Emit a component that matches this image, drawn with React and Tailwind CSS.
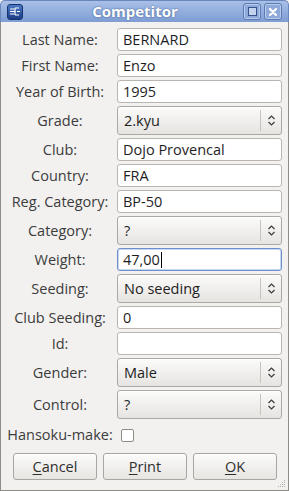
import React from 'react'

const font = { fontFamily: '"Open Sans", "DejaVu Sans", sans-serif' }

const Chevrons = () => (
  <svg width="9" height="13" viewBox="0 0 9 13" fill="none" stroke="#3c3c3c" strokeWidth="1.2">
    <path d="M1.5 5 L4.5 2 L7.5 5" />
    <path d="M1.5 8 L4.5 11 L7.5 8" />
  </svg>
)

const Entry = ({ value, focused }) => (
  <div
    className={`h-[23px] rounded-[3px] border bg-white px-[5px] flex items-center text-[14.5px] text-[#1e1e1e] ${
      focused ? 'border-[#6d8fcb] shadow-[inset_0_0_0_1px_#c9d8f0]' : 'border-[#b9b5b0]'
    }`}
  >
    <span>{value}</span>
    {focused && <span className="w-px h-[16px] bg-black ml-px" />}
  </div>
)

const Combo = ({ value }) => (
  <div className="h-[29px] rounded-[3px] border border-[#aca9a4] bg-gradient-to-b from-[#fbfbfa] to-[#e6e4e1] flex items-center shadow-[inset_0_1px_0_#ffffff]">
    <span className="flex-1 pl-[6px] text-[14.5px] text-[#1e1e1e]">{value}</span>
    <div className="w-px h-[21px] bg-[#c7c4c0]" />
    <div className="w-[20px] flex items-center justify-center">
      <Chevrons />
    </div>
  </div>
)

const Label = ({ children }) => (
  <div className="justify-self-center whitespace-nowrap text-[14.5px] text-[#3c3c3c]">{children}</div>
)

const Button = ({ mnemonic, rest }) => (
  <div className="w-[84px] h-[27px] rounded-[3px] border border-[#a9a6a1] bg-gradient-to-b from-[#fbfbfa] to-[#e7e5e2] shadow-[inset_0_1px_0_#ffffff] flex items-center justify-center text-[14.5px] text-[#2e2e2e]">
    <span>
      <span className="underline underline-offset-2">{mnemonic}</span>
      {rest}
    </span>
  </div>
)

const rows = [
  ['Last Name:', 'entry', 'BERNARD'],
  ['First Name:', 'entry', 'Enzo'],
  ['Year of Birth:', 'entry', '1995'],
  ['Grade:', 'combo', '2.kyu'],
  ['Club:', 'entry', 'Dojo Provencal'],
  ['Country:', 'entry', 'FRA'],
  ['Reg. Category:', 'entry', 'BP-50'],
  ['Category:', 'combo', '?'],
  ['Weight:', 'focus', '47,00'],
  ['Seeding:', 'combo', 'No seeding'],
  ['Club Seeding:', 'entry', '0'],
  ['Id:', 'entry', ''],
  ['Gender:', 'combo', 'Male'],
  ['Control:', 'combo', '?'],
]

export default function App() {
  return (
    <div className="w-[289px] h-[491px] flex flex-col bg-[#f2f1f0]" style={font}>
      {/* title bar */}
      <div className="h-[22px] rounded-t-[5px] border border-b-0 border-[#6a87bd] bg-gradient-to-b from-[#a9c0e8] to-[#7e9dd3] flex items-center px-[6px] relative">
        <div className="w-[16px] h-[16px] rounded-[3px] bg-gradient-to-b from-[#4a78c4] to-[#1d3f86] border border-[#163270] flex items-center justify-center">
          <svg width="10" height="9" viewBox="0 0 10 9" fill="none" stroke="#ffffff" strokeWidth="1.2">
            <path d="M0 2 H4 M0 4.5 H5 M0 7 H4 M5 1 V8 M5 1 H9 M5 8 H9 M7 4.5 H10" />
          </svg>
        </div>
        <div className="flex-1 text-center text-[15px] font-bold text-white [text-shadow:0_0_2px_#3b5588] ml-[4px]">
          Competitor
        </div>
        <div className="flex gap-[3px]">
          <div className="w-[18px] h-[17px] rounded-[3px] border border-[#5c7ab3] bg-[#8faada] shadow-[inset_0_0_0_1px_#b8cbed] flex items-center justify-center">
            <div className="w-[9px] h-[9px] border-[1.5px] border-[#34518a] bg-[#c3d3ef]" />
          </div>
          <div className="w-[18px] h-[17px] rounded-[3px] border border-[#5c7ab3] bg-[#8faada] shadow-[inset_0_0_0_1px_#b8cbed] flex items-center justify-center">
            <svg width="10" height="10" viewBox="0 0 10 10" stroke="#ffffff" strokeWidth="2.2" strokeLinecap="round">
              <path d="M2 2 L8 8 M8 2 L2 8" />
            </svg>
          </div>
        </div>
      </div>

      {/* body */}
      <div className="flex-1 border border-t-0 border-[#8e8c88] px-[6px] pt-[6px] flex flex-col relative">
        <div className="grid grid-cols-[106px_1fr] gap-x-[4px] gap-y-[3px] items-center">
          {rows.map(([label, kind, value]) => (
            <React.Fragment key={label}>
              <Label>{label}</Label>
              {kind === 'combo' ? (
                <Combo value={value} />
              ) : (
                <Entry value={value} focused={kind === 'focus'} />
              )}
            </React.Fragment>
          ))}
          <div className="justify-self-center whitespace-nowrap text-[14.5px] text-[#3c3c3c] h-[22px] flex items-center mt-[2px]">
            Hansoku-make:
          </div>
          <div className="h-[22px] flex items-center pl-[4px] mt-[2px]">
            <div className="w-[13px] h-[13px] rounded-[2px] border border-[#8f8c87] bg-white" />
          </div>
        </div>

        <div className="flex justify-between pl-[6px] pr-[5px] mt-[7px]">
          <Button mnemonic="C" rest="ancel" />
          <Button mnemonic="P" rest="rint" />
          <Button mnemonic="O" rest="K" />
        </div>

        {/* resize grip */}
        <svg className="absolute right-[2px] bottom-[2px]" width="9" height="9" viewBox="0 0 9 9" fill="#b5b2ad">
          <rect x="7" y="1" width="1" height="1" />
          <rect x="5" y="3" width="1" height="1" />
          <rect x="7" y="3" width="1" height="1" />
          <rect x="3" y="5" width="1" height="1" />
          <rect x="5" y="5" width="1" height="1" />
          <rect x="7" y="5" width="1" height="1" />
          <rect x="1" y="7" width="1" height="1" />
          <rect x="3" y="7" width="1" height="1" />
          <rect x="5" y="7" width="1" height="1" />
          <rect x="7" y="7" width="1" height="1" />
        </svg>
      </div>
    </div>
  )
}
